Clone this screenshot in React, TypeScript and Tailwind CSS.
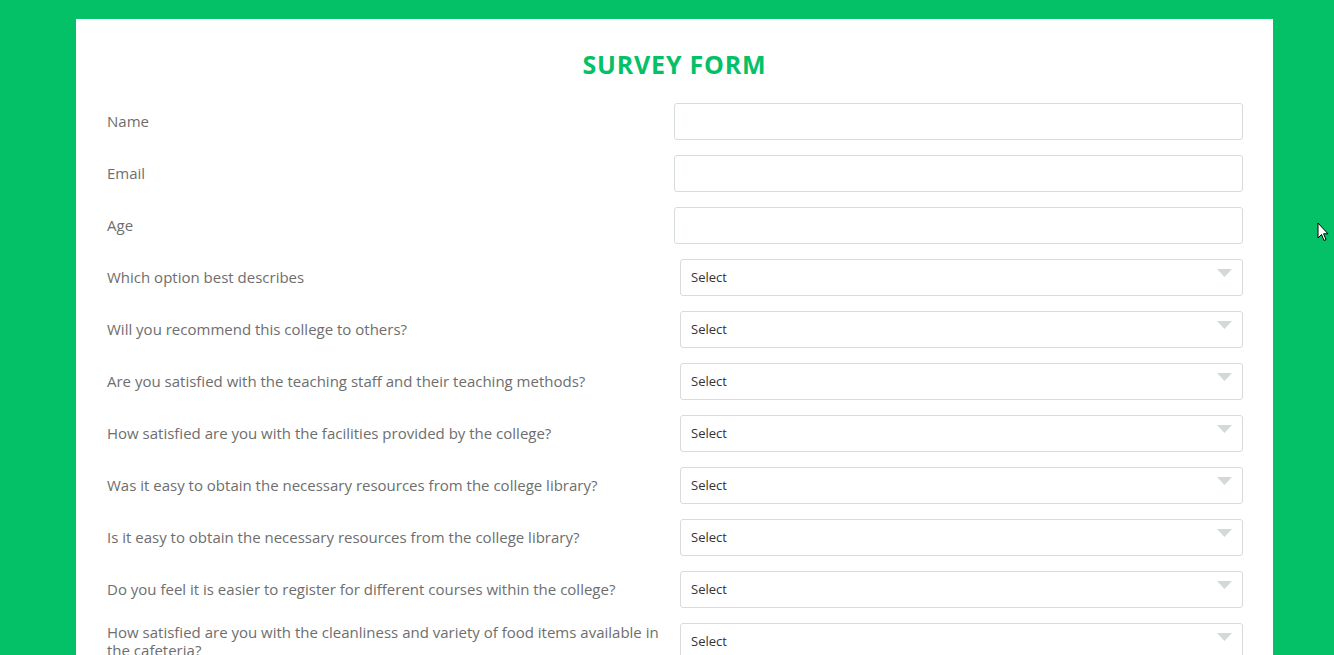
const questions = [
  "Which option best describes",
  "Will you recommend this college to others?",
  "Are you satisfied with the teaching staff and their teaching methods?",
  "How satisfied are you with the facilities provided by the college?",
  "Was it easy to obtain the necessary resources from the college library?",
  "Is it easy to obtain the necessary resources from the college library?",
  "Do you feel it is easier to register for different courses within the college?",
  "How satisfied are you with the cleanliness and variety of food items available in the cafeteria?",
];

function TextRow({ label }: { label: string }) {
  return (
    <div className="grid grid-cols-[568px_1fr] items-center">
      <label className="pl-px pr-2 text-[15px] leading-[18px] text-[#6e6e6e]">{label}</label>
      <input className="h-[37px] w-full rounded-[3px] border border-[#d6dbdb] bg-white px-3 outline-none" />
    </div>
  );
}

function SelectRow({ label }: { label: string }) {
  return (
    <div className="grid grid-cols-[568px_1fr] items-center">
      <label className="pl-px pr-2 text-[15px] leading-[18px] text-[#6e6e6e]">{label}</label>
      <div className="ml-[6px] flex h-[37px] items-center justify-between rounded-[3px] border border-[#d6dbdb] bg-white pl-[10px] pr-[10px]">
        <span className="pt-px text-[13px] text-[#333]">Select</span>
        <svg width="15" height="8" viewBox="0 0 15 8" className="-mt-[8px]">
          <polygon points="0,0 15,0 7.5,8" fill="#d3d8d8" />
        </svg>
      </div>
    </div>
  );
}

export default function App() {
  return (
    <div className="relative h-[655px] overflow-hidden bg-[#04c066] pt-[19px] font-['Open_Sans',sans-serif]">
      <div className="ml-[76px] min-h-[700px] w-[1197px] bg-white px-[30px] pt-[27px]">
        <h1 className="text-center text-[25px] font-bold tracking-[0.8px] text-[#04c066]">SURVEY FORM</h1>
        <form className="mt-[19px] flex flex-col gap-[15px]">
          <TextRow label="Name" />
          <TextRow label="Email" />
          <TextRow label="Age" />
          {questions.map((q) => (
            <SelectRow key={q} label={q} />
          ))}
        </form>
      </div>
      <svg className="absolute left-[1317px] top-[222px]" width="12" height="20" viewBox="0 0 12 20">
        <path d="M1 1 L1 16 L4.5 12.5 L7 18.5 L9 17.6 L6.6 11.8 L11 11.8 Z" fill="#fff" stroke="#000" strokeWidth="1" />
      </svg>
    </div>
  );
}
